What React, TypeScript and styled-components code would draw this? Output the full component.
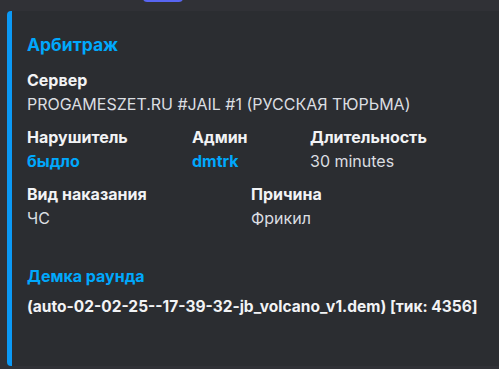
import React from 'react';

import styled, { createGlobalStyle } from 'styled-components';

interface Field {
  name: string;
  value: string;
  link?: boolean;
}

const GlobalStyle = createGlobalStyle`
  html, body {
    margin: 0;
    padding: 0;
    background: #303136;
    overflow: hidden;
  }
  body {
    font-family: Inter, "Noto Sans", "Liberation Sans", sans-serif;
    -webkit-font-smoothing: antialiased;
  }
`;

const rows: { columns: string; fields: Field[] }[] = [
  {
    columns: '1fr',
    fields: [{ name: 'Сервер', value: 'PROGAMESZET.RU #JAIL #1 (РУССКАЯ ТЮРЬМА)' }],
  },
  {
    columns: '165px 118px 1fr',
    fields: [
      { name: 'Нарушитель', value: 'быдло', link: true },
      { name: 'Админ', value: 'dmtrk', link: true },
      { name: 'Длительность', value: '30 minutes' },
    ],
  },
  {
    columns: '224px 1fr',
    fields: [
      { name: 'Вид наказания', value: 'ЧС' },
      { name: 'Причина', value: 'Фрикил' },
    ],
  },
];

const App: React.FC = () => {
  return (
    <Page>
      <GlobalStyle />
      <Header>
        <Author>Бот о наказании</Author>
        <AppBadge>APP</AppBadge>
        <Timestamp>02.02.2025 17:40</Timestamp>
      </Header>

      <Embed>
        <Title>Арбитраж</Title>
        <Fields>
          {rows.map((row, i) => (
            <FieldRow key={i} columns={row.columns}>
              {row.fields.map((field) => (
                <div key={field.name}>
                  <FieldName>{field.name}</FieldName>
                  <FieldValue link={field.link}>{field.value}</FieldValue>
                </div>
              ))}
            </FieldRow>
          ))}
        </Fields>

        <Demo>
          <DemoLink>Демка раунда</DemoLink>
          <DemoFile>(auto-02-02-25--17-39-32-jb_volcano_v1.dem) [тик: 4356]</DemoFile>
        </Demo>
      </Embed>
    </Page>
  );
};

const Page = styled.div`
  width: 499px;
  height: 369px;
  overflow: hidden;
  padding-left: 7px;
  box-sizing: border-box;
`;

const Header = styled.div`
  display: flex;
  align-items: center;
  height: 22px;
  margin-top: -17px;
  gap: 6px;
`;

const Author = styled.span`
  color: #f2f3f5;
  font-size: 16px;
  font-weight: 600;
`;

const AppBadge = styled.span`
  background: #5865f2;
  color: #fff;
  font-size: 10px;
  font-weight: 600;
  height: 15px;
  width: 40px;
  border-radius: 4px;
  display: inline-flex;
  align-items: center;
  justify-content: center;
`;

const Timestamp = styled.span`
  color: #949ba4;
  font-size: 12px;
  margin-left: 4px;
`;

const Embed = styled.div`
  margin-top: 6px;
  width: 560px;
  height: 355px;
  box-sizing: border-box;
  background: #2b2d31;
  border-left: 5px solid #0b99f5;
  border-radius: 4px;
  padding: 23px 16px 0 15px;
`;

const Title = styled.div`
  color: #00a8fc;
  font-size: 17.5px;
  font-weight: 700;
  line-height: 22px;
`;

const Fields = styled.div`
  display: flex;
  flex-direction: column;
  gap: 13px;
  margin-top: 14px;
`;

const FieldRow = styled.div<{ columns: string }>`
  display: grid;
  grid-template-columns: ${(props) => props.columns};
`;

const FieldName = styled.div`
  color: #f2f3f5;
  font-size: 16px;
  font-weight: 700;
  line-height: 20px;
  margin-bottom: 4px;
`;

const FieldValue = styled.div<{ link?: boolean }>`
  color: ${(props) => (props.link ? '#00a8fc' : '#dbdee1')};
  font-weight: ${(props) => (props.link ? 700 : 400)};
  font-size: 16px;
  line-height: 20px;
`;

const Demo = styled.div`
  margin-top: 38px;
`;

const DemoLink = styled.div`
  color: #00a8fc;
  font-size: 16px;
  font-weight: 700;
  line-height: 20px;
  margin-bottom: 11px;
`;

const DemoFile = styled.div`
  color: #f2f3f5;
  font-size: 15.5px;
  font-weight: 700;
  line-height: 20px;
`;

export default App;
